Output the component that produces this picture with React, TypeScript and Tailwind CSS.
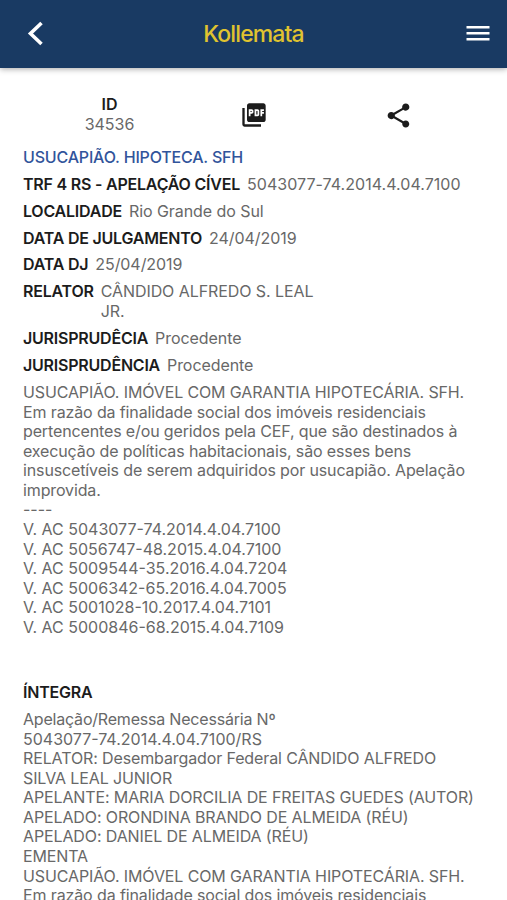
import { MdPictureAsPdf, MdShare } from 'react-icons/md'

const details = [
  { label: 'TRF 4 RS - APELAÇÃO CÍVEL', value: ['5043077-74.2014.4.04.7100'] },
  { label: 'LOCALIDADE', value: ['Rio Grande do Sul'] },
  { label: 'DATA DE JULGAMENTO', value: ['24/04/2019'] },
  { label: 'DATA DJ', value: ['25/04/2019'] },
  { label: 'RELATOR', value: ['CÂNDIDO ALFREDO S. LEAL', 'JR.'] },
  { label: 'JURISPRUDÊCIA', value: ['Procedente'] },
  { label: 'JURISPRUDÊNCIA', value: ['Procedente'] },
]

const summary = [
  'USUCAPIÃO. IMÓVEL COM GARANTIA HIPOTECÁRIA. SFH.',
  'Em razão da finalidade social dos imóveis residenciais',
  'pertencentes e/ou geridos pela CEF, que são destinados à',
  'execução de políticas habitacionais, são esses bens',
  'insuscetíveis de serem adquiridos por usucapião. Apelação',
  'improvida.',
]

const precedents = [
  '----',
  'V. AC 5043077-74.2014.4.04.7100',
  'V. AC 5056747-48.2015.4.04.7100',
  'V. AC 5009544-35.2016.4.04.7204',
  'V. AC 5006342-65.2016.4.04.7005',
  'V. AC 5001028-10.2017.4.04.7101',
  'V. AC 5000846-68.2015.4.04.7109',
]

const fullText = [
  'RELATOR: Desembargador Federal CÂNDIDO ALFREDO',
  'SILVA LEAL JUNIOR',
  'APELANTE: MARIA DORCILIA DE FREITAS GUEDES (AUTOR)',
  'APELADO: ORONDINA BRANDO DE ALMEIDA (RÉU)',
  'APELADO: DANIEL DE ALMEIDA (RÉU)',
  'EMENTA',
  'USUCAPIÃO. IMÓVEL COM GARANTIA HIPOTECÁRIA. SFH.',
  'Em razão da finalidade social dos imóveis residenciais',
]

function Lines({ lines, className = '' }: { lines: string[]; className?: string }) {
  return (
    <div className={className}>
      {lines.map((line, i) => (
        <p key={i} className="whitespace-nowrap">{line}</p>
      ))}
    </div>
  )
}

function Header() {
  return (
    <header className="h-[68px] shrink-0 bg-[#193a63] grid grid-cols-3 items-center px-[17px] shadow-[0_1px_6px_rgba(0,0,0,0.35)]">
      <button aria-label="Voltar" className="justify-self-start ml-[9px]">
        <svg width="17" height="26" viewBox="0 0 17 26" fill="none" stroke="#fff" strokeWidth="3.6">
          <path d="M15.5 2 4.5 12.5l11 10.5" />
        </svg>
      </button>
      <h1 className="justify-self-center text-[23px] font-medium tracking-[-0.9px] text-[#e0c32f]">Kollemata</h1>
      <button aria-label="Menu" className="justify-self-end">
        <svg width="24" height="16" viewBox="0 0 24 16" fill="#fff">
          <path d="M.5 0h23v2.6H.5zM.5 6h23v2.6H.5zM.5 12h23v2.6H.5z" />
        </svg>
      </button>
    </header>
  )
}

export default function App() {
  return (
    <div className="h-[900px] overflow-hidden flex flex-col bg-white font-['Inter','Liberation_Sans',sans-serif]">
      <Header />

      <main className="px-[23px] pt-[27px] text-[16px] leading-[19.58px] text-[#686868]">
        {/* Actions */}
        <div className="grid grid-cols-[173px_116px_172px] items-center h-[40px] mb-[12.6px]">
          <div className="text-center">
            <p className="font-semibold text-[#1c1c1c]">ID</p>
            <p>34536</p>
          </div>
          <button aria-label="PDF" className="justify-self-center text-[#1c1c1c]">
            <MdPictureAsPdf size={28} />
          </button>
          <button aria-label="Compartilhar" className="justify-self-center text-[#1c1c1c]">
            <MdShare size={29} />
          </button>
        </div>

        {/* Case details */}
        <div className="flex flex-col gap-[7.4px]">
          <h2 className="font-medium tracking-[-0.18px] text-[#31549b] whitespace-nowrap">USUCAPIÃO. HIPOTECA. SFH</h2>
          {details.map(({ label, value }) => (
            <div key={label} className="flex gap-[7px]">
              <strong className="font-semibold tracking-[-0.22px] text-[#1c1c1c] whitespace-nowrap">{label}</strong>
              <Lines lines={value} className={value[0].startsWith('5') ? 'tracking-[0.04px]' : 'tracking-[-0.07px]'} />
            </div>
          ))}
          <div>
            <Lines lines={summary} className="tracking-[-0.13px]" />
            <Lines lines={precedents} />
          </div>
        </div>

        <section className="mt-[45.6px] flex flex-col gap-[7.4px]">
          <h2 className="font-semibold tracking-[-0.22px] text-[#1c1c1c]">ÍNTEGRA</h2>
          <div>
            <p className="tracking-[-0.2px]">Apelação/Remessa Necessária Nº</p>
            <p>5043077-74.2014.4.04.7100/RS</p>
            <Lines lines={fullText} className="tracking-[-0.12px]" />
          </div>
        </section>
      </main>
    </div>
  )
}
